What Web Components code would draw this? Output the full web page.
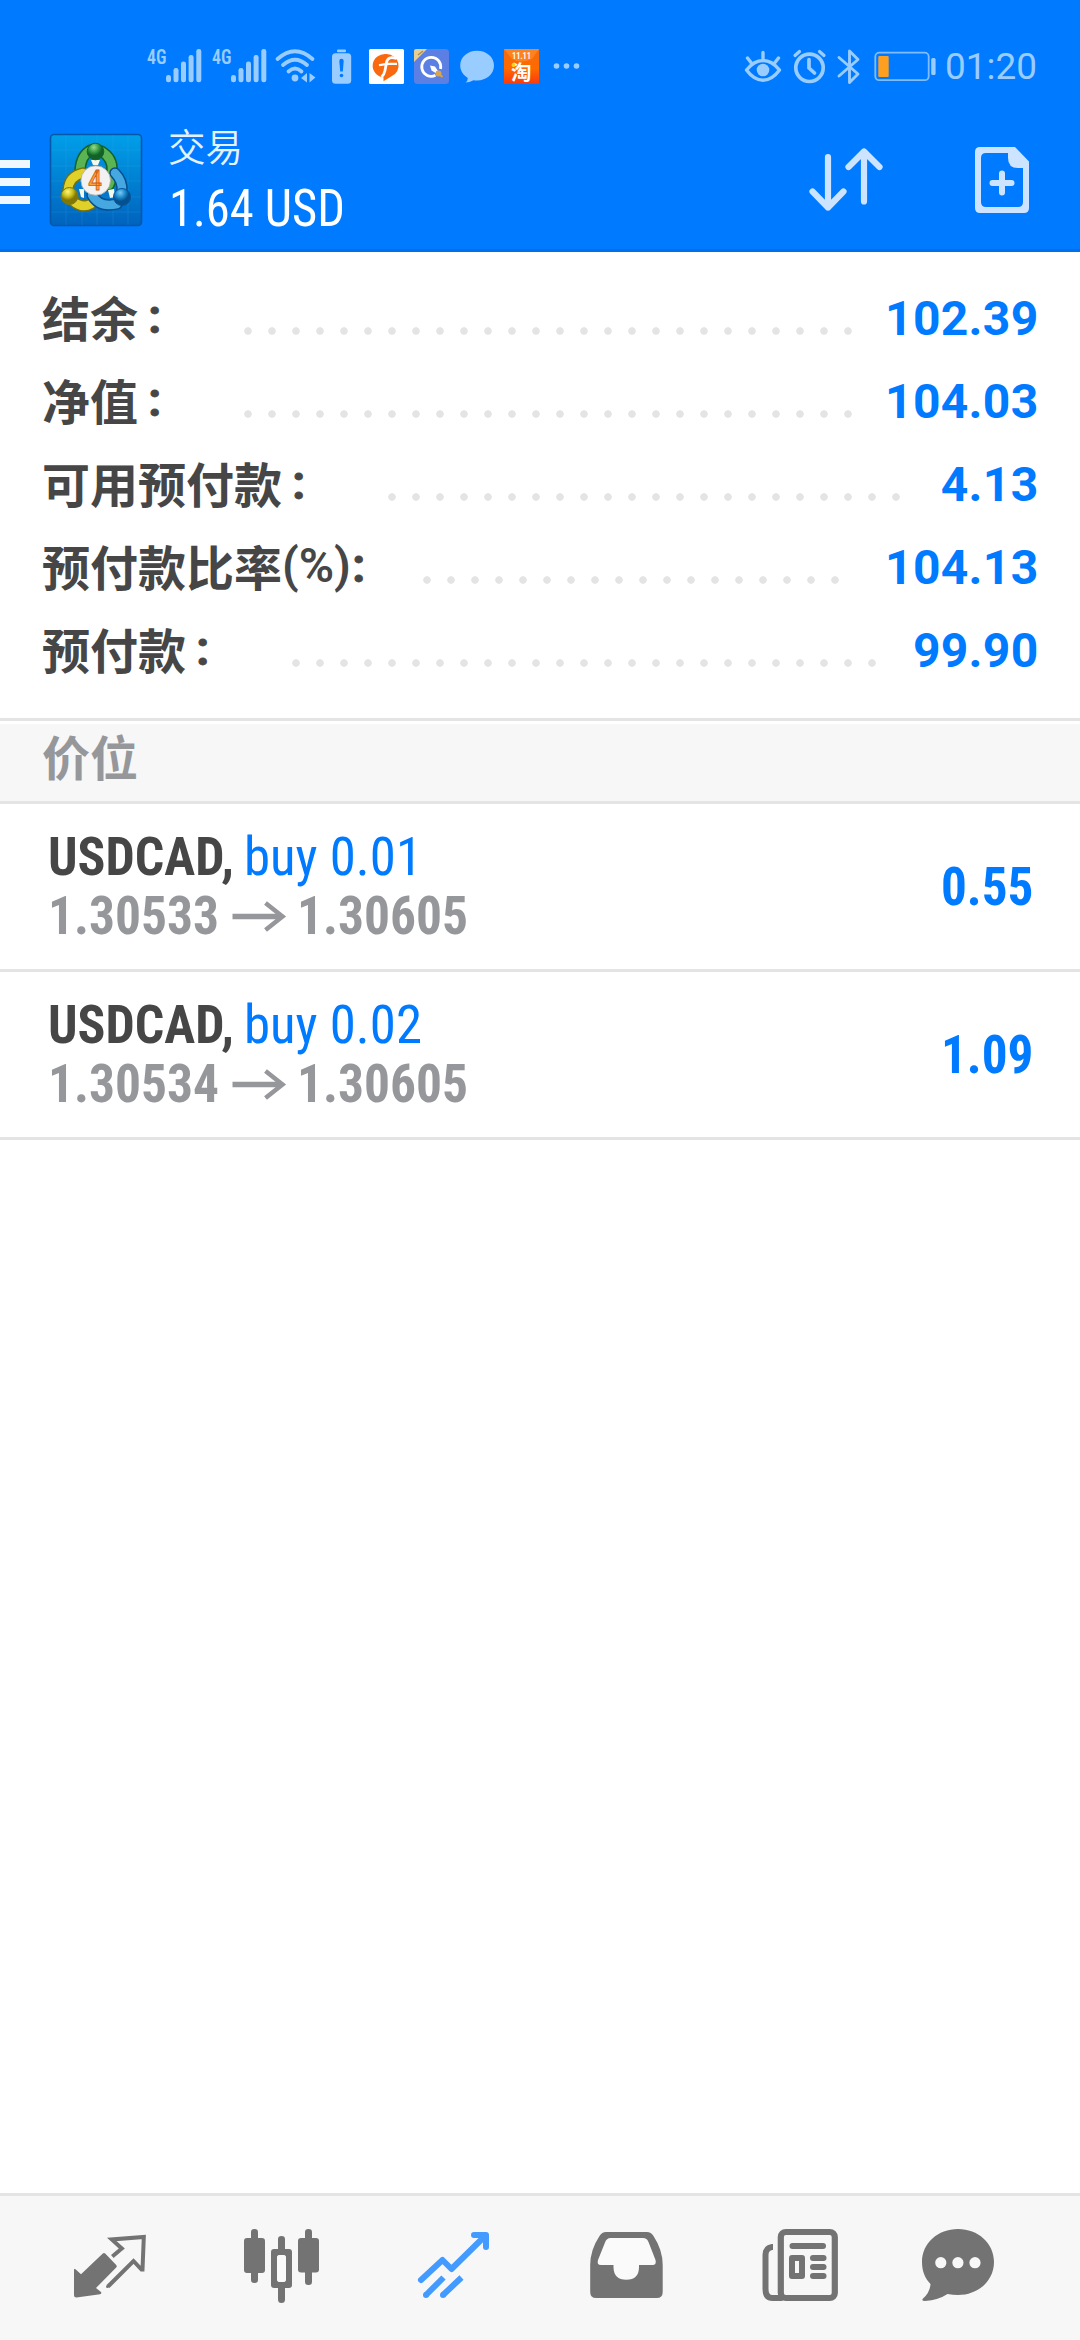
<!DOCTYPE html>
<html lang="zh-CN">
<head>
<meta charset="utf-8">
<title>交易</title>
<style>
html,body{margin:0;padding:0}
body{background:#fff;font-family:Roboto,"Noto Sans CJK SC",sans-serif;width:1080px;height:2340px;overflow:hidden}
</style>
</head>
<body>
<trade-app></trade-app>
<script>
const ICONS = {
  signal: `<g fill="#99ccff"><text x="147" y="64" font-family="Roboto" font-size="21" font-weight="600" font-stretch="75%" textLength="19.5" lengthAdjust="spacingAndGlyphs">4G</text>
    <rect x="166" y="75" width="5" height="7.300" rx="2.300"/><rect x="173.500" y="68" width="5" height="14.300" rx="2.300"/><rect x="181" y="61.500" width="5" height="20.800" rx="2.300"/><rect x="188.600" y="55" width="5" height="27.300" rx="2.300"/><rect x="196.300" y="49" width="5" height="33.300" rx="2.300"/></g>`,
  wifi: `<g fill="none" stroke="#99ccff" stroke-width="3.800" stroke-linecap="round"><path d="M277.500 59Q295 43.500 312.500 59M283 65Q295 54.500 307 65M288.500 71.500Q295 65.500 301.500 71.500"/></g><g fill="#99ccff"><circle cx="295" cy="78" r="3.400"/><path d="M307 73v9.500l-6-4.500zM309.500 73v9.500l6-5z"/></g>`,
  alert: `<g fill="#99ccff"><rect x="337" y="49.500" width="9" height="2.700" rx="1"/><rect x="332" y="53.200" width="19.200" height="30.600" rx="3.500"/></g><path d="M339.300 61a2.200 2.200 0 0 1 4.400 0l-.9 10.500h-2.600z" fill="#007aff"/><circle cx="341.500" cy="75.500" r="1.800" fill="#007aff"/>`,
  fapp: `<rect x="369" y="49" width="35" height="35" rx="1.500" fill="#fff"/><path d="M386.500 54a12.300 11.700 0 0 1 5 22.300l-8 5v-4A12.300 11.700 0 0 1 386.500 54z" fill="#f96a10"/><path d="M396.500 58.500q-8.500-3-10 4l-1.500 8q-1 4.500-3.500 6.500" fill="none" stroke="#fff" stroke-width="2.800"/><path d="M379 65.300q5-1.300 10-1.500h8" fill="none" stroke="#fff" stroke-width="2.200"/>`,
  qapp: `<rect x="414" y="49" width="35" height="35" rx="3.500" fill="#5b7fe3"/><path d="M414 62V51q0-2 2-2h11z" fill="#e6cf97"/><path d="M418 55l5-4" stroke="#a88d58" stroke-width="1.500"/><path d="M435.500 75.300A9.500 9.500 0 1 1 440.500 69" fill="none" stroke="#fff" stroke-width="2.800"/><path d="M430 65.500l5 1 3 4.500-2 .5.500 2-5-3z" fill="#fff"/><circle cx="438.500" cy="73.500" r="3" fill="#d9a64c"/><path d="M440 75l2.500 2" stroke="#d9a64c" stroke-width="1.800"/>`,
  bubble: `<path d="M477 50.800c9.500 0 17 6.300 17 14.700s-7.500 15-17 15q-2 0-3.500-.3-4 2.300-8 2.400 2.300-2 2.300-4.700c-4.500-2.700-7.600-7-7.600-12.400 0-8.400 7.400-14.700 16.800-14.700z" fill="#99ccff"/>`,
  tao: `<defs><linearGradient id="t" x2="0" y2="1"><stop stop-color="#f46a12"/><stop offset=".55" stop-color="#ff6a00"/><stop offset="1" stop-color="#f83a10"/></linearGradient></defs><rect x="504" y="49" width="35" height="35" fill="url(#t)"/><path d="M504 49l8 10q9 5 20 0l7-10z" fill="#ff912b" opacity=".65"/><text x="512" y="58.500" font-family="Roboto" font-size="9" font-weight="700" fill="#fff" textLength="19" lengthAdjust="spacingAndGlyphs">11.11</text><text x="511" y="80" font-family="Roboto, Noto Sans CJK SC" font-size="20.500" font-weight="700" fill="#fff">淘</text><circle cx="513.500" cy="65" r="2" fill="#ffd51c"/>`,
  more: `<g fill="#99ccff"><circle cx="556.500" cy="66" r="2.800"/><circle cx="566.500" cy="66" r="2.800"/><circle cx="576.500" cy="66" r="2.800"/></g>`,
  eye: `<g fill="none" stroke="#99ccff" stroke-width="3.400" stroke-linecap="round" stroke-linejoin="round"><path d="M746.500 70Q754 60.500 763 60.500T779.500 70Q772 80.200 763 80.200T746.500 70zM763 52.500v6M747.500 58l3.500 4.500M778.500 58l-3.500 4.500"/></g><circle cx="763" cy="70" r="6.300" fill="#99ccff"/>`,
  alarm: `<g fill="none" stroke="#99ccff" stroke-width="3.700" stroke-linecap="round"><circle cx="809.500" cy="67.800" r="13.700"/><path d="M809 59.500v8.500l5.500 5"/><path d="M795 55.500l4.500-4M824 55.500l-4.500-4" stroke-width="3.200"/></g>`,
  bt: `<path d="M839 57.500l19 16.500-8.500 8.500V51l8.500 8.500-19 16.500" fill="none" stroke="#99ccff" stroke-width="2.900" stroke-linecap="round" stroke-linejoin="round"/>`,
  battery: `<rect x="875.300" y="52.600" width="53.400" height="27.600" rx="4" fill="none" stroke="#80bdff" stroke-width="1.800"/><rect x="878.300" y="56" width="10.400" height="21" rx="1" fill="#ff9f20"/><rect x="931.200" y="58" width="4.400" height="17" rx="1.600" fill="#99ccff"/>`,
  logo: `<defs><linearGradient id="b" x2="0" y2="1"><stop stop-color="#009fe9"/><stop offset="1" stop-color="#0063bd"/></linearGradient><radialGradient id="g" cx=".4" cy=".25"><stop stop-color="#9bdc91"/><stop offset=".6" stop-color="#369b45"/><stop offset="1" stop-color="#126126"/></radialGradient><radialGradient id="y" cx=".4" cy=".25"><stop stop-color="#fff77d"/><stop offset=".6" stop-color="#c9bd1b"/><stop offset="1" stop-color="#817707"/></radialGradient><radialGradient id="u" cx=".4" cy=".25"><stop stop-color="#79ccf5"/><stop offset=".6" stop-color="#1a86c9"/><stop offset="1" stop-color="#05508f"/></radialGradient></defs>
    <rect x="50.500" y="134.500" width="91" height="91" rx="3.500" fill="url(#b)" stroke="#0557a8" stroke-width="1.600"/>
    <path d="M66 135v90M82 135v90M97 135v90M113 135v90M128 135v90M51 150h90M51 166h90M51 181h90M51 197h90M51 212h90" stroke="#49b6ef" stroke-width=".6" opacity=".28"/>
    <g fill="none" stroke-linecap="round">
    <path d="M80 170q1-15 11-20M101 151q12 7 11 20 0 8-3 14" stroke="#126126" stroke-width="11.500"/><path d="M80 170q1-15 11-20M101 151q12 7 11 20 0 8-3 14" stroke="#5ab453" stroke-width="8.500"/>
    <path d="M83 173q-14 3-15 17M73 201q9 8 18 3" stroke="#776f0a" stroke-width="11.500"/><path d="M83 173q-14 3-15 17M73 201q9 8 18 3" stroke="#dfd12a" stroke-width="8.500"/>
    <path d="M115 173q8 8 7 19M92 195q7 13 25 9" stroke="#064e8d" stroke-width="11.500"/><path d="M115 173q8 8 7 19M92 195q7 13 25 9" stroke="#46a8e1" stroke-width="8.500"/></g>
    <path d="M91 160h9l-2 5h-5zM79 189l2 8 3 1 0-9zM108 190l2 8 5-1-1-8z" fill="#f5f9ed"/>
    <circle cx="95.500" cy="151.500" r="8.300" fill="url(#g)" stroke="#16632c"/><circle cx="69.500" cy="196" r="8.500" fill="url(#y)" stroke="#81770a"/><circle cx="122" cy="197" r="8.500" fill="url(#u)" stroke="#08549a"/>
    <circle cx="95.700" cy="180.500" r="14.800" fill="#f3f1f1" stroke="#aaa8a4" stroke-width=".8"/><text x="95" y="190" text-anchor="middle" font-family="Roboto" font-size="27" font-weight="500" fill="#ffa23c" stroke="#cf5d12" stroke-width=".9" transform="translate(95 0) scale(.88 1) translate(-95 0)">4</text>`,
  menu: `<path d="M0 160h30v8H0zM0 178h30v8H0zM0 196h30v8H0z" fill="#f0f8ff"/>`,
  sort: `<path d="M828 157v50.500M812.500 191.500l15.500 16 15.500-16M864 201.500V151.500M848.500 167l15.500-15.500 15.500 15.500" fill="none" stroke="#cce4ff" stroke-width="6.200" stroke-linecap="round" stroke-linejoin="round"/>`,
  add: `<path fill="#cce4ff" fill-rule="evenodd" d="M980 147h35l14 14.500V208q0 5-5 5h-44q-5 0-5-5v-56q0-5 5-5zm6 6q-5 0-5 5v44q0 5 5 5h32q5 0 5-5v-34h-5q-10 0-10-10v-5z"/><path d="M992.500 183h19M1002 173.500v19" stroke="#cce4ff" stroke-width="6" stroke-linecap="round"/>`,
  quotes: `<path d="M102.800 2253.500q1.200-1 2.400 0l11 11.500q1.200 1.300 0 2.500l-20.200 20.500 5 4q1 1.500-1 2.200l-23.500 3.300q-2.500 0-2.500-2.500v-26l1.500.3 5.500 5z" fill="#737373"/><path d="M108 2286.500l25.500-25.500 8 8.500h1l1.300-32.500-32 2.500 10 9-9.500 8" fill="none" stroke="#737373" stroke-width="4"/><circle cx="107.500" cy="2286.500" r="1.500" fill="#737373"/>`,
  chart: `<g fill="#737373"><rect x="244" y="2238" width="21" height="35" rx="3"/><rect x="251" y="2229" width="7" height="54" rx="3.300"/><rect x="298" y="2238" width="21" height="34.500" rx="3"/><rect x="305" y="2229" width="7" height="56" rx="3.300"/><path fill-rule="evenodd" d="M274 2249h15q3 0 3 3v33q0 3-3 3h-15q-3 0-3-3v-33q0-3 3-3zm6 6q-3 0-3 3v21q0 3 3 3h3q3 0 3-3v-21q0-3-3-3z"/><path d="M278 2250v-11q0-3 3.500-3t3.500 3v11zM278 2287v12.500q0 3.500 3.500 3.500t3.500-3.500V2287z"/></g><rect x="277" y="2255" width="9" height="27" rx="3" fill="#fafafa"/>`,
  trade: `<g fill="none" stroke="#439bff" stroke-width="6"><path d="M421 2280l21.500-20 9 9L485 2236" stroke-linecap="round" stroke-linejoin="round"/><path d="M474 2235h12v12" stroke-linecap="round" stroke-linejoin="round"/><path d="M426 2295l17.500-17.500M443 2295l18.500-17.500"/></g><g fill="#439bff"><circle cx="426" cy="2295" r="3"/><circle cx="443" cy="2295" r="3"/></g>`,
  inbox: `<path d="M606 2232h41q4 0 6.500 4 9.200 14 9.200 29v27q0 6-6 6h-60.500q-6 0-6-6v-27q0-15 9.300-29 2.500-4 6.500-4z" fill="#737373"/><path d="M610.500 2238h32.500q4 0 5.500 4l7 18q1.300 5-3 5h-13.500v2q0 12.700-12.700 12.700t-12.800-12.700v-2H601q-4.500 0-3-5l7-17.500q1.500-4.500 5.500-4.500z" fill="#fafafa"/>`,
  news: `<g fill="none" stroke="#737373"><rect x="780.800" y="2232" width="54" height="66" rx="5" stroke-width="6.200"/><path d="M773 2247h-1q-6.500 1-6.500 8v34q0 9 7 9h10" stroke-width="6"/></g><g fill="#737373"><rect x="789.500" y="2243" width="36.500" height="6" rx="3"/><path fill-rule="evenodd" d="M792 2255h10q3 0 3 3v18q0 3-3 3h-10q-3 0-3-3v-18q0-3 3-3zm3 6v12h4v-12z"/><rect x="810" y="2255" width="16.500" height="6" rx="3"/><rect x="810" y="2264" width="16.500" height="6" rx="3"/><rect x="810" y="2273" width="16.500" height="6" rx="3"/></g>`,
  chat: `<path d="M958 2229c20 0 36 14 36 33s-16 33-36 33q-5 0-10.500-1-9 6-22.500 7-4 0-2-2.500 7-6 7.500-14.500c-5.500-5.500-8.500-13-8.500-22 0-19 16-33 36-33z" fill="#737373"/><g fill="#f7f7f7"><circle cx="940.800" cy="2262.700" r="5.600"/><circle cx="957.900" cy="2262.700" r="5.600"/><circle cx="975" cy="2262.700" r="5.600"/></g>`
};

function define(name, html, setup) {
  customElements.define(name, class extends HTMLElement {
    connectedCallback() {
      if (this.shadowRoot) return;
      this.attachShadow({mode: 'open'}).innerHTML = typeof html === 'function' ? html(this) : html;
      if (setup) setup(this);
    }
  });
}
const at = (e, n, d = '') => e.getAttribute(n) ?? d;

/* box is "x y width height" in screen units */
define('ui-icon', e => {
  const b = at(e, 'box').split(' ');
  return `<style>:host{display:block;flex:none}svg{display:block}</style><svg width="${b[2]}" height="${b[3]}" viewBox="${b.join(' ')}">${ICONS[at(e, 'name')]}</svg>`;
});

/* a run of text condensed to a given advance width */
define('fit-text', `<style>:host{display:block;flex:none;white-space:nowrap;font-stretch:75%}span{display:inline-block;transform-origin:0 50%}</style><span><slot></slot></span>`, e => {
  const s = e.shadowRoot.querySelector('span'), w = +at(e, 'w');
  const n = s.getBoundingClientRect().width;
  if (n) s.style.transform = `scaleX(${w / n})`;
  e.style.width = w + 'px';
});

define('status-bar', `<style>:host{display:flex;height:100px;padding-top:30px;box-sizing:border-box;color:#99ccff}
.gap{flex:1}fit-text{font:400 36px/75px Roboto;margin-right:43px}</style>
<ui-icon name="signal" box="0 30 207 70"></ui-icon><ui-icon name="signal" box="142 30 65 70"></ui-icon>
<ui-icon name="wifi" box="272 30 53 70"></ui-icon><ui-icon name="alert" box="325 30 40 70"></ui-icon>
<ui-icon name="fapp" box="365 30 45 70"></ui-icon><ui-icon name="qapp" box="410 30 45 70"></ui-icon>
<ui-icon name="bubble" box="455 30 45 70"></ui-icon><ui-icon name="tao" box="500 30 45 70"></ui-icon><ui-icon name="more" box="545 30 40 70"></ui-icon>
<div class="gap"></div>
<ui-icon name="eye" box="740 30 46 70"></ui-icon><ui-icon name="alarm" box="786 30 46 70"></ui-icon><ui-icon name="bt" box="832 30 36 70"></ui-icon><ui-icon name="battery" box="868 30 77 70"></ui-icon>
<fit-text w="92">01:20</fit-text>`);

define('app-header', `<style>:host{display:flex;height:152px;box-sizing:border-box;border-bottom:3px solid #0070e8;color:#fff}
.t{flex:1;padding-top:20px}.s{font:350 37.500px/50px "Noto Sans CJK SC";color:#e6f2ff;margin-left:-1px}.m{font:400 51px/60px Roboto;padding-top:9px}</style>
<ui-icon name="menu" box="0 100 40 149"></ui-icon><ui-icon name="logo" box="40 100 129 149"></ui-icon>
<div class="t"><div class="s"><slot name="title"></slot></div><div class="m"><slot></slot></div></div>
<ui-icon name="sort" box="790 100 130 149"></ui-icon><ui-icon name="add" box="920 100 160 149"></ui-icon>`);

define('account-row', e => `<style>:host{display:flex;height:83px;align-items:flex-start;padding:0 42px}
.l{font:700 48px/83px Roboto,"Noto Sans CJK SC";color:#464646;width:${at(e, 'dots') - 46}px;white-space:nowrap;flex:none;margin-top:-2px;display:flex}
.cn{font-family:"Noto Sans CJK SC";font-weight:700}.c{padding-left:${at(e, 'pad', 1)}px;-webkit-text-stroke:.8px #464646}.p{font-weight:600}
.d{height:8px;margin-top:50px;flex:none;width:${24 * (at(e, 'count') - 1) + 8}px;background:radial-gradient(circle at 4px 4px,#e4e4e4 3.400px,transparent 4.100px) 0 0/24px 8px}
.v{font:700 48px/84px Roboto;letter-spacing:.3px;color:#007aff;margin-left:auto;margin-right:-.5px}</style>
<div class="l"><span class="cn"><slot></slot></span>${e.hasAttribute('pct') ? '<span class="p">(%)</span>' : ''}<span class="c">:</span></div><div class="d"></div><div class="v">${at(e, 'value')}</div>`);

define('section-title', `<style>:host{display:block;border-top:3px solid #e4e4e4;border-bottom:3px solid #e4e4e4;padding-top:3px;background:#f7f7f7 content-box}
div{height:77px;padding-left:42px;font:700 48px/63px "Noto Sans CJK SC";color:#96979b;overflow:hidden}</style><div><slot></slot></div>`);

define('position-row', e => `<style>:host{display:flex;height:165px;border-bottom:3px solid #e4e4e4;align-items:flex-start;font:700 54px/59px Roboto;color:#96979b}
.b{flex:1;padding:23px 0 0 48px}.r{display:flex}.s{color:#464646}.k{color:#007aff;font-weight:400;margin-left:10px}.v{color:#007aff;margin:53px 46.500px 0 0}svg{display:block;flex:none}</style>
<div class="b"><div class="r"><fit-text class="s" w="186">USDCAD,</fit-text><fit-text class="k" w="${at(e, 'kw')}">${at(e, 'deal')}</fit-text></div>
<div class="r"><fit-text w="171">${at(e, 'open')}</fit-text><svg width="78" height="59" viewBox="219 886 78 59"><path d="M232.500 916.500h48" fill="none" stroke="#96979b" stroke-width="5.500"/><path d="M265.500 903l17 13.500-17 13.500" fill="none" stroke="#96979b" stroke-width="4.500"/></svg><fit-text w="171">${at(e, 'now')}</fit-text></div></div>
<fit-text class="v" w="92.500">${at(e, 'profit')}</fit-text>`);

define('tab-bar', `<style>:host{display:flex;border-top:3px solid #e4e4e4;background:#f7f7f7;height:144px}</style>` +
  ['quotes', 'chart', 'trade', 'inbox', 'news', 'chat'].map((n, i) => `<ui-icon name="${n}" box="${i * 180} 2196 180 144"></ui-icon>`).join(''));

define('trade-app', `<style>:host{display:flex;flex-direction:column;height:2340px;width:1080px}.top{background:#007aff}.acc{height:441px;padding-top:25px;box-sizing:content-box}.fill{flex:1}</style>
<div class="top"><status-bar></status-bar><app-header><span slot="title">交易</span><fit-text w="176">1.64 USD</fit-text></app-header></div>
<div class="acc">
<account-row dots="248" count="26" pad="10" value="102.39">结余</account-row>
<account-row dots="248" count="26" pad="10" value="104.03">净值</account-row>
<account-row dots="392" count="22" pad="10" value="4.13">可用预付款</account-row>
<account-row dots="427" count="18" pct value="104.13">预付款比率</account-row>
<account-row dots="296" count="25" pad="10" value="99.90">预付款</account-row>
</div>
<section-title>价位</section-title>
<position-row deal="buy 0.01" kw="178" open="1.30533" now="1.30605" profit="0.55"></position-row>
<position-row deal="buy 0.02" kw="178" open="1.30534" now="1.30605" profit="1.09"></position-row>
<div class="fill"></div><tab-bar></tab-bar>`);
</script>
</body>
</html>
